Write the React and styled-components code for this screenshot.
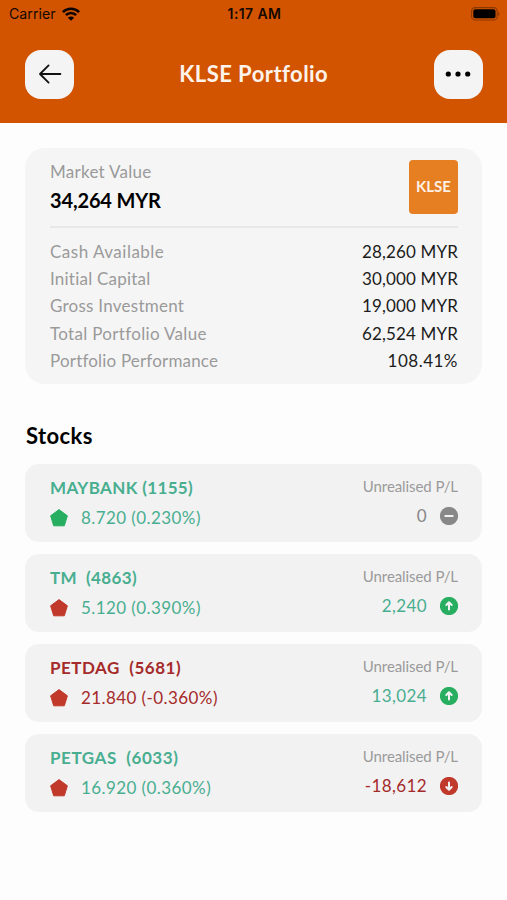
import styled, { createGlobalStyle } from 'styled-components';

const GlobalStyle = createGlobalStyle`
  * {
    box-sizing: border-box;
  }

  body {
    margin: 0;
    background: #fdfdfd;
    font-family: Lato, "Open Sans", sans-serif;
    font-variant-ligatures: none;
  }
`;

const Screen = styled.div`
  width: 507px;
  height: 900px;
  overflow: hidden;
`;

const Header = styled.header`
  height: 123px;
  background: #d35400;
`;

const StatusBar = styled.div`
  height: 27px;
  padding: 0 7px 0 9px;
  display: grid;
  grid-template-columns: 1fr auto 1fr;
  align-items: center;
  color: #140800;
  font-family: Inter, sans-serif;
  font-size: 14.2px;
  line-height: 27px;
`;

const Carrier = styled.div`
  display: flex;
  align-items: center;
  gap: 6px;
`;

const Time = styled.div`
  font-weight: 600;
  font-size: 14px;
  letter-spacing: 0.4px;
`;

const Battery = styled.svg`
  justify-self: end;
`;

const NavRow = styled.div`
  padding: 22.5px 24.5px 0 25px;
  display: flex;
  align-items: center;
  justify-content: space-between;
`;

const NavButton = styled.button`
  width: 49px;
  height: 49px;
  padding: 0;
  border: none;
  border-radius: 16px;
  background: #f4f4f4;
  display: flex;
  align-items: center;
  justify-content: center;
`;

const Title = styled.h1`
  margin: 0;
  color: #fdf3ea;
  font-size: 22px;
  font-weight: 700;
  line-height: 28px;
  letter-spacing: 0.45px;
`;

const Content = styled.main`
  padding: 25px 25px 0;
`;

const Summary = styled.section`
  height: 236px;
  padding: 10px 24px 0 25px;
  border-radius: 20px;
  background: #f5f5f5;
`;

const SummaryTop = styled.div`
  height: 70px;
  display: flex;
  justify-content: space-between;
  border-bottom: 2px solid #e8e8e8;
`;

const Label = styled.div`
  color: #9a9a9a;
  font-size: 17px;
  line-height: 27px;
  letter-spacing: ${({ $track }) => $track || 0}px;
`;

const MarketValue = styled.div`
  font-size: 20px;
  font-weight: 700;
  line-height: 30px;
  letter-spacing: -0.15px;
`;

const Badge = styled.div`
  width: 49px;
  height: 54px;
  margin-top: 2px;
  border-radius: 4px;
  background: #e67e22;
  color: #fdf0e4;
  font-size: 15px;
  font-weight: 700;
  line-height: 53px;
  text-align: center;
`;

const SummaryRow = styled.div`
  height: 27.2px;
  display: flex;
  justify-content: space-between;
`;

const Rows = styled.div`
  padding-top: 10px;
`;

const Amount = styled.div`
  color: #1c1c1c;
  font-size: 17px;
  line-height: 27px;
  letter-spacing: ${({ $track }) => $track || 0.15}px;
`;

const SectionTitle = styled.h2`
  margin: 37px 0 13px 1px;
  font-size: 22px;
  font-weight: 700;
  line-height: 30px;
  letter-spacing: 0.4px;
`;

const StockList = styled.div`
  display: flex;
  flex-direction: column;
  gap: 12px;
`;

const StockCard = styled.div`
  height: 78px;
  padding: 10px 24px 0 25px;
  border-radius: 14px;
  background: #f2f2f2;
  display: flex;
  justify-content: space-between;
`;

const StockName = styled.div`
  color: ${({ $color }) => $color};
  font-size: 17px;
  font-weight: 700;
  line-height: 27px;
  letter-spacing: ${({ $track }) => $track || 0}px;
  white-space: pre;
`;

const StockPrice = styled.div`
  height: 34px;
  display: flex;
  align-items: center;
  gap: 13px;
  color: ${({ $color }) => $color};
  font-size: 17px;
  line-height: 22px;
  letter-spacing: 0.42px;
`;

const ProfitSide = styled.div`
  display: flex;
  flex-direction: column;
  align-items: flex-end;
`;

const ProfitLabel = styled.div`
  color: #9a9a9a;
  font-size: 15px;
  line-height: 24px;
  letter-spacing: -0.08px;
`;

const ProfitValue = styled.div`
  height: 35px;
  display: flex;
  align-items: center;
  gap: 13px;
  color: ${({ $color }) => $color};
  font-size: 17px;
  line-height: 22px;
  letter-spacing: 0.4px;
`;

const teal = '#48ae90';
const maroon = '#a52a2a';
const green = '#27ae60';
const red = '#c0392b';
const grey = '#888888';

const summary = [
  { label: 'Cash Available', value: '28,260 MYR', track: 0.5 },
  { label: 'Initial Capital', value: '30,000 MYR', track: 0.22 },
  { label: 'Gross Investment', value: '19,000 MYR', track: 0.25 },
  { label: 'Total Portfolio Value', value: '62,524 MYR', track: 0.32 },
  { label: 'Portfolio Performance', value: '108.41%', track: 0.18, valueTrack: 0.5 },
];

const stocks = [
  { name: 'MAYBANK (1155)', track: 0.36, price: '8.720 (0.230%)', color: teal, shape: green, profit: '0', profitColor: grey, trend: 'flat' },
  { name: 'TM  (4863)', track: 0.38, price: '5.120 (0.390%)', color: teal, shape: red, profit: '2,240', profitColor: teal, trend: 'up' },
  { name: 'PETDAG  (5681)', track: 0.52, price: '21.840 (-0.360%)', color: maroon, shape: red, profit: '13,024', profitColor: teal, trend: 'up' },
  { name: 'PETGAS  (6033)', track: 0.57, price: '16.920 (0.360%)', color: teal, shape: red, profit: '-18,612', profitColor: maroon, trend: 'down' },
];

const trendColors = { flat: grey, up: green, down: red };

function Pentagon({ color }) {
  return (
    <svg width="18" height="18" viewBox="0 0 18 18">
      <path d="M9 0.6 17.4 6.8 14.3 16.8H3.7L0.6 6.8Z" fill={color} stroke={color} strokeWidth="1" strokeLinejoin="round" />
    </svg>
  );
}

function TrendIcon({ trend }) {
  return (
    <svg width="18" height="18" viewBox="0 0 18 18" fill="none" stroke="#f2f2f2" strokeWidth="2" strokeLinecap="round" strokeLinejoin="round">
      <circle cx="9" cy="9" r="9.1" fill={trendColors[trend]} stroke="none" />
      {trend === 'flat' && <path d="M5.3 9h7.4" />}
      {trend === 'up' && <path d="M9 12.6V6M6.3 8 9 5.3 11.7 8" />}
      {trend === 'down' && <path d="M9 5.4V12M6.3 10 9 12.7l2.7-2.7" />}
    </svg>
  );
}

function Stock({ stock }) {
  return (
    <StockCard>
      <div>
        <StockName $color={stock.color} $track={stock.track}>{stock.name}</StockName>
        <StockPrice $color={stock.color}>
          <Pentagon color={stock.shape} />
          <span>{stock.price}</span>
        </StockPrice>
      </div>
      <ProfitSide>
        <ProfitLabel>Unrealised P/L</ProfitLabel>
        <ProfitValue $color={stock.profitColor}>
          <span>{stock.profit}</span>
          <TrendIcon trend={stock.trend} />
        </ProfitValue>
      </ProfitSide>
    </StockCard>
  );
}

function App() {
  return (
    <Screen>
      <GlobalStyle />
      <Header>
        <StatusBar>
          <Carrier>
            <span>Carrier</span>
            <svg width="18" height="14" viewBox="0 0 18 14" fill="none" stroke="#0c0400" strokeWidth="2.6">
              <path d="M0.9 5.1a11.5 11.5 0 0 1 16.2 0" />
              <path d="M3.9 8.1a7.2 7.2 0 0 1 10.2 0" />
              <path d="M9 13.8 5.9 10.7a4.4 4.4 0 0 1 6.2 0Z" fill="#0c0400" stroke="none" />
            </svg>
          </Carrier>
          <Time>1:17 AM</Time>
          <Battery width="29" height="14" viewBox="0 0 29 14">
            <rect x="0.6" y="0.6" width="25.6" height="12.4" rx="3.6" fill="none" stroke="#8a3800" strokeWidth="1.1" />
            <rect x="2.3" y="2.3" width="22.2" height="9" rx="2" fill="#000" />
            <path d="M27.4 4.9a2.3 2.3 0 0 1 0 4Z" fill="#8a3800" />
          </Battery>
        </StatusBar>
        <NavRow>
          <NavButton>
            <svg width="24" height="22" viewBox="0 0 24 22" fill="none" stroke="#111" strokeWidth="1.8" strokeLinecap="round" strokeLinejoin="round">
              <path d="M22.4 11H2M10.6 2.4 2 11l8.6 8.6" />
            </svg>
          </NavButton>
          <Title>KLSE Portfolio</Title>
          <NavButton>
            <svg width="26" height="6" viewBox="0 0 26 6" fill="#000">
              <circle cx="3.3" cy="3" r="2.6" />
              <circle cx="13" cy="3" r="2.6" />
              <circle cx="22.7" cy="3" r="2.6" />
            </svg>
          </NavButton>
        </NavRow>
      </Header>
      <Content>
        <Summary>
          <SummaryTop>
            <div>
              <Label $track={0.27}>Market Value</Label>
              <MarketValue>34,264 MYR</MarketValue>
            </div>
            <Badge>KLSE</Badge>
          </SummaryTop>
          <Rows>
            {summary.map((row) => (
              <SummaryRow key={row.label}>
                <Label $track={row.track}>{row.label}</Label>
                <Amount $track={row.valueTrack}>{row.value}</Amount>
              </SummaryRow>
            ))}
          </Rows>
        </Summary>
        <SectionTitle>Stocks</SectionTitle>
        <StockList>
          {stocks.map((stock) => (
            <Stock key={stock.name} stock={stock} />
          ))}
        </StockList>
      </Content>
    </Screen>
  );
}

export default App;
